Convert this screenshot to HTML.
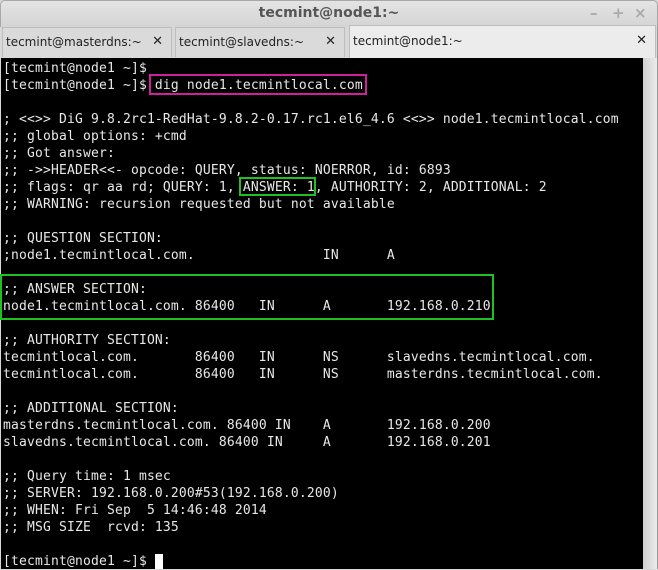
<!DOCTYPE html>
<html><head><meta charset="utf-8"><style>
*{margin:0;padding:0;box-sizing:border-box}
body{width:658px;height:569px;overflow:hidden;background:#d8d8d8;position:relative;font-family:"DejaVu Sans",sans-serif}
.title{position:absolute;left:0;top:0;width:658px;height:27px;background:linear-gradient(#e4e4e4,#d4d4d4);border:1px solid #a8a8a8;border-bottom:none;border-radius:5px 5px 0 0;text-align:center;font-weight:bold;font-size:14px;color:#555;line-height:24px}
.ctl{position:absolute;top:0;font-size:15px;color:#aaa;font-weight:bold;line-height:27px}
.tab{position:absolute;top:27px;height:30px;background:#dadada;border:1px solid #bdbdbd;border-bottom:none;font-size:12px;color:#222;line-height:28px;padding-left:3px}
.tab.a{background:#ececec;top:25px;height:33px}
.tab b{position:absolute;right:8px;top:0;font-size:13px}
.term{position:absolute;left:1px;top:58px;width:642px;height:511px;background:#000}
.sb{position:absolute;left:643px;top:58px;width:14px;height:511px;background:linear-gradient(90deg,#cfcfcf,#ececec)}
.edge{position:absolute;left:657px;top:27px;width:1px;height:542px;background:#999}
pre{position:absolute;left:3px;top:60px;font-family:"DejaVu Sans Mono","Liberation Mono",monospace;font-size:13px;line-height:17px;color:#e8e8e8;letter-spacing:0.17px}
.box{position:absolute;border:2px solid}
</style></head><body>
<div class="title">tecmint@node1:~</div>
<div class="ctl" style="left:590px">–</div>
<div class="ctl" style="left:612px">+</div>
<div class="ctl" style="left:634px">×</div>
<div class="tab" style="left:2px;width:170px">tecmint@masterdns:~<b>✕</b></div>
<div class="tab" style="left:175px;width:170px">tecmint@slavedns:~<b>✕</b></div>
<div class="tab a" style="left:349px;width:307px;padding-left:3px;line-height:30px">tecmint@node1:~<b>✕</b></div>
<div class="term"></div>
<div class="sb"></div>
<div class="edge"></div>
<pre>[tecmint@node1 ~]$
[tecmint@node1 ~]$ dig node1.tecmintlocal.com

; &lt;&lt;&gt;&gt; DiG 9.8.2rc1-RedHat-9.8.2-0.17.rc1.el6_4.6 &lt;&lt;&gt;&gt; node1.tecmintlocal.com
;; global options: +cmd
;; Got answer:
;; -&gt;&gt;HEADER&lt;&lt;- opcode: QUERY, status: NOERROR, id: 6893
;; flags: qr aa rd; QUERY: 1, ANSWER: 1, AUTHORITY: 2, ADDITIONAL: 2
;; WARNING: recursion requested but not available

;; QUESTION SECTION:
;node1.tecmintlocal.com.                IN      A

;; ANSWER SECTION:
node1.tecmintlocal.com. 86400   IN      A       192.168.0.210

;; AUTHORITY SECTION:
tecmintlocal.com.       86400   IN      NS      slavedns.tecmintlocal.com.
tecmintlocal.com.       86400   IN      NS      masterdns.tecmintlocal.com.

;; ADDITIONAL SECTION:
masterdns.tecmintlocal.com. 86400 IN    A       192.168.0.200
slavedns.tecmintlocal.com. 86400 IN     A       192.168.0.201

;; Query time: 1 msec
;; SERVER: 192.168.0.200#53(192.168.0.200)
;; WHEN: Fri Sep  5 14:46:48 2014
;; MSG SIZE  rcvd: 135

[tecmint@node1 ~]$ <span style="background:#fff">&nbsp;</span></pre>
<div class="box" style="border-color:#d01f9e;left:149px;top:74px;width:218px;height:21px"></div>
<div class="box" style="border-color:#1fc01f;left:239px;top:177px;width:77px;height:19px"></div>
<div class="box" style="border-color:#1fc01f;left:0px;top:274px;width:494px;height:46px"></div>
</body></html>
